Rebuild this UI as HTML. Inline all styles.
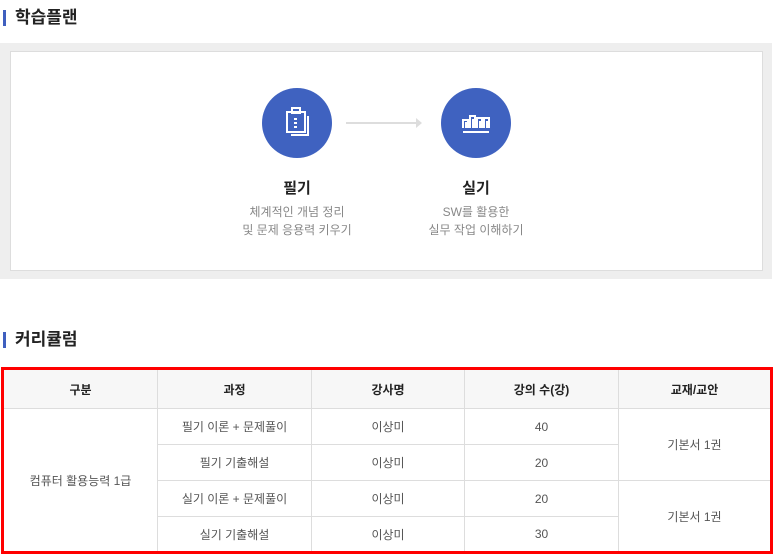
<!DOCTYPE html>
<html><head><meta charset="utf-8"><style>
*{margin:0;padding:0;box-sizing:border-box}
body{width:775px;height:551px;background:#fff;font-family:"Liberation Sans","Noto Sans CJK KR",sans-serif;position:relative;overflow:hidden}
.h{position:absolute;left:3px;font-size:17px;font-weight:bold;color:#222;padding-left:12px;line-height:20px}
.h:before{content:"";position:absolute;left:0;top:2px;width:3px;height:16px;background:#3f5fbf}
.gray{position:absolute;left:0;top:43px;width:772px;height:236px;background:#eee}
.inner{position:absolute;left:10px;top:51px;width:753px;height:220px;background:#fff;border:1px solid #ddd}
.c{position:absolute;width:70px;height:70px;border-radius:50%;background:#3f62c0;top:88px}
.t{position:absolute;text-align:center;width:200px}
.t b{display:block;font-size:15px;color:#222;line-height:20px;margin-bottom:4px}
.t span{display:block;font-size:12px;color:#888;line-height:18px}
table{position:absolute;left:1px;top:367px;width:772px;border-collapse:collapse;border:3px solid #f00;font-size:12px;color:#555;text-align:center}
td,th{border:1px solid #ddd;height:36px}
th{background:#f7f7f7;color:#222;font-weight:bold;height:40px}
</style></head><body>
<div class="h" style="top:8px">학습플랜</div>
<div class="gray"></div><div class="inner"></div>
<div class="c" style="left:262px"><svg width="70" height="70" viewBox="0 0 70 70" fill="none" stroke="#fff" stroke-width="2"><rect x="25" y="24" width="18" height="20"/><rect x="30" y="20" width="8" height="5"/><path d="M46 28v19H29"/><path d="M32 31h3M32 35h3M32 39h3"/></svg></div>
<div class="c" style="left:441px"><svg width="70" height="70" viewBox="0 0 70 70" fill="none" stroke="#fff" stroke-width="2"><path d="M22 40v-8h5v8M29 40v-12h5v12M36 40v-10h5v10M43 40v-10h5v10M25 34v6M32 31v9M39 33v7M46 33v7"/><path d="M22 44h26"/></svg></div>
<svg style="position:absolute;left:346px;top:117px" width="80" height="12"><path d="M0 6h74" stroke="#ddd" stroke-width="2"/><path d="M70 1l6 5-6 5z" fill="#ddd"/></svg>
<div class="t" style="left:197px;top:179px"><b>필기</b><span>체계적인 개념 정리</span><span>및 문제 응용력 키우기</span></div>
<div class="t" style="left:376px;top:179px"><b>실기</b><span>SW를 활용한</span><span>실무 작업 이해하기</span></div>
<div class="h" style="top:330px">커리큘럼</div>
<table>
<tr><th style="width:155px">구분</th><th style="width:154px">과정</th><th style="width:153px">강사명</th><th style="width:154px">강의 수(강)</th><th>교재/교안</th></tr>
<tr><td rowspan="4">컴퓨터 활용능력 1급</td><td>필기 이론 + 문제풀이</td><td>이상미</td><td>40</td><td rowspan="2">기본서 1권</td></tr>
<tr><td>필기 기출해설</td><td>이상미</td><td>20</td></tr>
<tr><td>실기 이론 + 문제풀이</td><td>이상미</td><td>20</td><td rowspan="2">기본서 1권</td></tr>
<tr><td style="height:31px">실기 기출해설</td><td>이상미</td><td>30</td></tr>
</table>
</body></html>
